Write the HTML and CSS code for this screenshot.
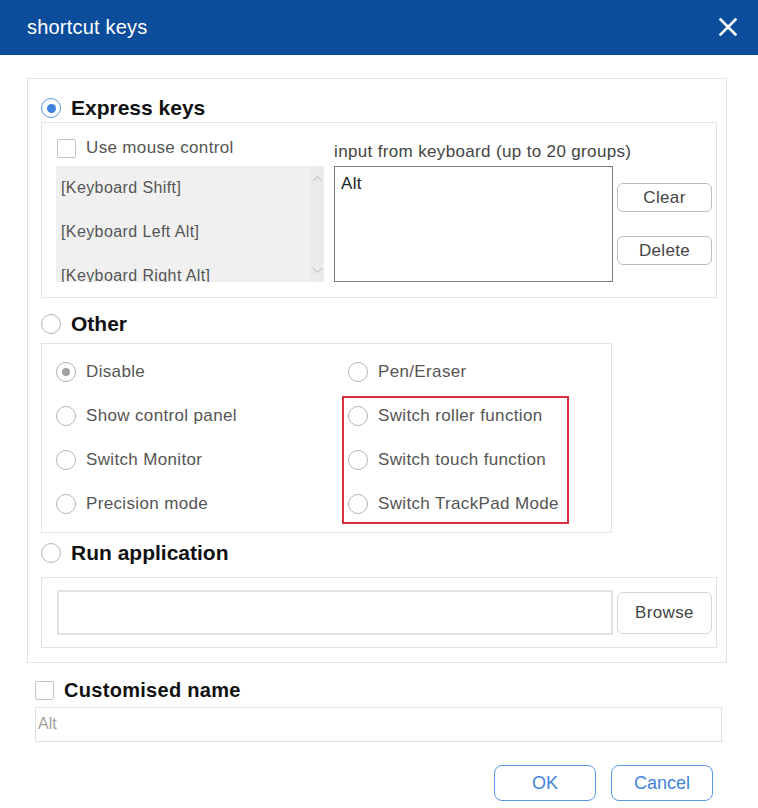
FILE: index.html
```html
<!DOCTYPE html>
<html lang="en">
<head>
  <meta charset="UTF-8" />
  <title>shortcut keys</title>
  <link rel="stylesheet" href="styles.css">
</head>
<body>
  <div class="titlebar">
    <span class="title">shortcut keys</span>
    <svg class="close" width="18" height="18" viewBox="0 0 18 18">
      <path d="M1.5 1.5 L16.5 16.5 M16.5 1.5 L1.5 16.5" stroke="#fff" stroke-width="2.6" stroke-linecap="square" />
    </svg>
  </div>

  <div class="content">
    <div class="panel">
      <div class="opt-head head-express">
        <span class="radio on"></span>
        <span>Express keys</span>
      </div>
      <div class="box express">
        <div class="left-col">
          <div class="mouse-row">
            <span class="check"></span>
            <span>Use mouse control</span>
          </div>
          <div class="key-list">
            <div class="items">
              <div class="item">[Keyboard Shift]</div>
              <div class="item">[Keyboard Left Alt]</div>
              <div class="item">[Keyboard Right Alt]</div>
            </div>
            <div class="scrollbar">
              <svg width="11" height="7" viewBox="0 0 11 7"><polyline points="1,6 5.5,1.5 10,6" fill="none" stroke="#c9c9c9" stroke-width="1.2" /></svg>
              <svg width="11" height="7" viewBox="0 0 11 7"><polyline points="1,1 5.5,5.5 10,1" fill="none" stroke="#c9c9c9" stroke-width="1.2" /></svg>
            </div>
          </div>
        </div>
        <div class="mid-col">
          <div class="kb-label">input from keyboard (up to 20 groups)</div>
          <div class="kb-input">Alt</div>
        </div>
        <div class="btn-col">
          <button class="btn">Clear</button>
          <button class="btn">Delete</button>
        </div>
      </div>

      <div class="opt-head head-other">
        <span class="radio"></span>
        <span>Other</span>
      </div>
      <div class="box other">
        <div class="other-col first">
          <div class="opt"><span class="radio dim-on"></span>Disable</div>
          <div class="opt"><span class="radio"></span>Show control panel</div>
          <div class="opt"><span class="radio"></span>Switch Monitor</div>
          <div class="opt"><span class="radio"></span>Precision mode</div>
        </div>
        <div class="other-col second">
          <div class="opt"><span class="radio"></span>Pen/Eraser</div>
          <div class="highlight">
            <div class="opt"><span class="radio"></span>Switch roller function</div>
            <div class="opt"><span class="radio"></span>Switch touch function</div>
            <div class="opt"><span class="radio"></span>Switch TrackPad Mode</div>
          </div>
        </div>
      </div>

      <div class="opt-head head-run">
        <span class="radio"></span>
        <span>Run application</span>
      </div>
      <div class="box run">
        <div class="path-input"></div>
        <button class="btn browse">Browse</button>
      </div>
    </div>
  </div>

  <div class="custom">
    <div class="custom-head">
      <span class="check"></span>
      <span>Customised name</span>
    </div>
    <div class="name-input">Alt</div>
  </div>

  <div class="footer">
    <button class="btn-blue">OK</button>
    <button class="btn-blue">Cancel</button>
  </div>
</body>
</html>
```

FILE: styles.css
```css
body {
  margin: 0;
  width: 758px;
  height: 808px;
  background: #fff;
  font-family: "Liberation Sans", Arial, sans-serif;
  font-size: 17px;
  letter-spacing: 0.35px;
  color: #555;
  overflow: hidden;
}
.titlebar {
  height: 55px;
  background: #0c4d9b;
  display: flex;
  align-items: center;
  justify-content: space-between;
  padding: 0 21px 0 27px;
  color: #fff;
}
.title {
  font-size: 20px;
  letter-spacing: 0.2px;
  margin-top: -1px;
}
.close { margin-top: -1px; }

.content {
  padding: 23px 31px 0 27px;
}
.panel {
  border: 1px solid #e4e4e4;
  padding: 0 9px 14px 13px;
}
.box {
  border: 1px solid #e4e4e4;
}

/* section headers with radio */
.opt-head {
  display: flex;
  align-items: center;
  gap: 10px;
  height: 24px;
  font-size: 21px;
  font-weight: bold;
  letter-spacing: 0;
  color: #111;
}
.head-express { margin: 17px 0 2px; }
.head-other { margin: 14px 0 7px; }
.head-run { margin: 8px 0 12px; }

.radio {
  width: 20px;
  height: 20px;
  box-sizing: border-box;
  border: 1.5px solid #b4b4b4;
  border-radius: 50%;
  background: #fff;
  flex-shrink: 0;
  display: flex;
  align-items: center;
  justify-content: center;
}
.radio.on { border-color: #5b97e3; }
.radio.on::after {
  content: "";
  width: 9px;
  height: 9px;
  border-radius: 50%;
  background: #3d82dc;
}
.radio.dim-on { border-color: #b0b0b0; }
.radio.dim-on::after {
  content: "";
  width: 8px;
  height: 8px;
  border-radius: 50%;
  background: #a0a0a0;
}
.check {
  width: 19px;
  height: 19px;
  box-sizing: border-box;
  border: 1px solid #c4c4c4;
  border-radius: 2px;
  background: #fff;
  flex-shrink: 0;
}

/* express keys */
.express {
  display: flex;
  padding: 15px 4px 14px 14px;
  height: 145px;
}
.left-col { width: 268px; }
.mouse-row {
  display: flex;
  align-items: center;
  gap: 10px;
  height: 20px;
  margin: 0 0 8px 1px;
}
.key-list {
  display: flex;
  height: 116px;
  background: #f0f0f0;
  overflow: hidden;
}
.items {
  flex: 1;
  padding-left: 5px;
  font-size: 16px;
  letter-spacing: 0.4px;
  color: #555;
}
.item {
  height: 44px;
  line-height: 44px;
  white-space: nowrap;
}
.scrollbar {
  width: 13px;
  background: #ebebeb;
  display: flex;
  flex-direction: column;
  justify-content: space-between;
  align-items: center;
  padding: 9px 0 8px;
}
.mid-col {
  margin-left: 10px;
  width: 279px;
}
.kb-label {
  line-height: 20px;
  margin: 4px 0 4px;
  color: #444;
  white-space: nowrap;
}
.kb-input {
  height: 116px;
  box-sizing: border-box;
  border: 1px solid #7a7a7a;
  padding: 7px 6px;
  color: #222;
  line-height: 20px;
}
.btn-col {
  margin-left: 4px;
  display: flex;
  flex-direction: column;
  gap: 24px;
  padding-top: 45px;
}
.btn {
  width: 95px;
  height: 29px;
  box-sizing: border-box;
  border: 1px solid #bdbdbd;
  border-radius: 6px;
  background: #fff;
  font-family: inherit;
  font-size: 17px;
  letter-spacing: 0.35px;
  color: #444;
  padding: 0;
}

/* other */
.other {
  display: flex;
  width: 571px;
  padding: 6px 0 6px 14px;
  box-sizing: border-box;
}
.other-col.first { width: 284px; }
.other-col.second { width: 231px; }
.second .opt { padding-left: 8px; }
.opt {
  height: 44px;
  display: flex;
  align-items: center;
  gap: 10px;
  white-space: nowrap;
}
.highlight {
  outline: 2px solid #d9323c;
  outline-offset: -4px;
}

/* run application */
.run {
  display: flex;
  align-items: center;
  gap: 4px;
  padding: 12px 4px 12px 15px;
}
.path-input {
  width: 556px;
  height: 45px;
  box-sizing: border-box;
  border: 2px solid #e2e2e2;
}
.btn.browse {
  height: 42px;
  border-color: #d6d6d6;
  border-width: 1.5px;
}

/* customised name */
.custom {
  margin: 17px 36px 0 35px;
}
.custom-head {
  display: flex;
  align-items: center;
  gap: 10px;
  height: 20px;
  font-size: 20px;
  font-weight: bold;
  letter-spacing: 0.3px;
  color: #111;
}
.name-input {
  margin-top: 7px;
  height: 35px;
  box-sizing: border-box;
  border: 1.5px solid #e0e0e0;
  padding: 0 2px;
  line-height: 32px;
  font-size: 16px;
  letter-spacing: 0;
  color: #a0a0a0;
}

.footer {
  display: flex;
  justify-content: flex-end;
  gap: 15px;
  padding-right: 45px;
  margin-top: 23px;
}
.btn-blue {
  width: 102px;
  height: 36px;
  box-sizing: border-box;
  border: 1.5px solid #5a98e6;
  border-radius: 8px;
  background: #fff;
  font-family: inherit;
  font-size: 18px;
  color: #3f84d8;
  padding: 0;
}
```
